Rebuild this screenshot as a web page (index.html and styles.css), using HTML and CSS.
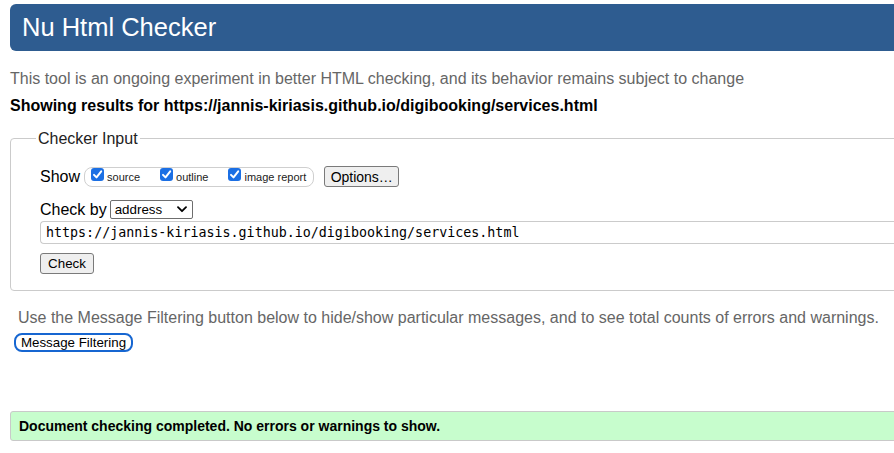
FILE: index.html
```html
<!DOCTYPE html>
<html lang="en">
<head>
<meta charset="utf-8">
<title>Nu Html Checker</title>
<link rel="stylesheet" href="styles.css">
</head>
<body>
<div class="page">
  <h1 class="header">Nu Html Checker</h1>
  <p class="intro">This tool is an ongoing experiment in better HTML checking, and its behavior remains subject to change</p>
  <p class="showing">Showing results for https://jannis-kiriasis.github.io/digibooking/services.html</p>
  <fieldset class="checker">
    <legend class="legend">Checker Input</legend>
    <div class="row show-row">
      <span class="label">Show</span>
      <span class="group">
        <span class="opt"><svg class="cb" width="13" height="13" viewBox="0 0 13 13"><rect width="13" height="13" rx="3" fill="#1b6fe4"/><path d="M3 6.9 L5.5 9.4 L10.2 3.4" fill="none" stroke="#fff" stroke-width="2" stroke-linecap="round" stroke-linejoin="round"/></svg><span class="opt-text">source</span></span>
        <span class="opt"><svg class="cb" width="13" height="13" viewBox="0 0 13 13"><rect width="13" height="13" rx="3" fill="#1b6fe4"/><path d="M3 6.9 L5.5 9.4 L10.2 3.4" fill="none" stroke="#fff" stroke-width="2" stroke-linecap="round" stroke-linejoin="round"/></svg><span class="opt-text">outline</span></span>
        <span class="opt"><svg class="cb" width="13" height="13" viewBox="0 0 13 13"><rect width="13" height="13" rx="3" fill="#1b6fe4"/><path d="M3 6.9 L5.5 9.4 L10.2 3.4" fill="none" stroke="#fff" stroke-width="2" stroke-linecap="round" stroke-linejoin="round"/></svg><span class="opt-text">image report</span></span>
      </span>
      <span class="btn options">Options…</span>
    </div>
    <div class="row checkby-row">
      <span class="label">Check by</span>
      <span class="select">address<svg class="chev" width="10" height="7" viewBox="0 0 10 7"><path d="M1 1.2 L5 5.2 L9 1.2" fill="none" stroke="#000" stroke-width="1.8" stroke-linecap="round" stroke-linejoin="round"/></svg></span>
    </div>
    <div class="url">https://jannis-kiriasis.github.io/digibooking/services.html</div>
    <div class="row check-row">
      <span class="btn check">Check</span>
    </div>
  </fieldset>
  <p class="filter-note">Use the Message Filtering button below to hide/show particular messages, and to see total counts of errors and warnings.</p>
  <span class="btn filter">Message Filtering</span>
  <div class="success">Document checking completed. No errors or warnings to show.</div>
</div>
</body>
</html>
```
FILE: styles.css
```css
html, body {
  margin: 0;
  padding: 0;
  overflow: hidden;
  background: #fff;
}
body {
  font-family: "Liberation Sans", Arial, sans-serif;
  font-size: 16px;
  color: #000;
}
.page {
  width: 1100px;
  padding: 4px 0 0 10px;
  display: flex;
  flex-direction: column;
  align-items: flex-start;
}
.header {
  align-self: stretch;
  margin: 0;
  height: 47px;
  line-height: 47px;
  padding-left: 12px;
  background: #2e5c90;
  color: #fff;
  font-size: 25.5px;
  font-weight: normal;
  border-radius: 6px;
}
.intro {
  margin: 18px 0 0 0;
  line-height: 19px;
  color: #666;
}
.showing {
  margin: 8px 0 0 0;
  line-height: 19px;
  font-weight: bold;
}
.checker {
  align-self: stretch;
  margin: 14px 0 0 0;
  padding: 0 0 16px 29px;
  border: 1px solid #cbcbcb;
  border-radius: 4px;
  min-width: 0;
}
.legend {
  padding: 0 2px;
  margin-left: -4px;
  line-height: 19px;
  color: #222;
}
.row {
  display: flex;
  align-items: center;
}
.label {
  line-height: 19px;
}
.show-row {
  margin-top: 18px;
  height: 21px;
}
.group {
  display: flex;
  align-items: center;
  margin-left: 4px;
  height: 18px;
  padding: 0 7px 0 6px;
  border: 1px solid #cfcfcf;
  border-radius: 8px;
}
.opt {
  display: flex;
  align-items: center;
  margin-right: 20px;
}
.opt:last-child {
  margin-right: 0;
}
.cb {
  display: block;
  margin-top: -4px;
}
.opt-text {
  font-size: 11px;
  margin-left: 3px;
  color: #222;
}
.btn {
  display: inline-flex;
  align-items: center;
  justify-content: center;
  box-sizing: border-box;
  background: #efefef;
  border: 1px solid #7a7a7a;
  border-radius: 3px;
  font-size: 13.33px;
  color: #000;
  white-space: nowrap;
}
.options {
  margin-left: 10px;
  width: 75px;
  height: 21px;
  font-size: 14px;
}
.checkby-row {
  margin-top: 13px;
  height: 19px;
}
.select {
  display: inline-flex;
  align-items: center;
  justify-content: space-between;
  box-sizing: border-box;
  margin-left: 3px;
  width: 83px;
  height: 19px;
  padding: 0 5px 0 4px;
  border: 1px solid #6e6e6e;
  border-radius: 2px;
  font-size: 13.33px;
}
.chev {
  display: block;
}
.url {
  margin-top: 2px;
  height: 21px;
  line-height: 21px;
  padding-left: 5px;
  border: 1px solid #cbcbcb;
  border-right: none;
  border-radius: 4px 0 0 4px;
  font-family: "DejaVu Sans Mono", "Liberation Mono", monospace;
  font-size: 13.33px;
  color: #000;
}
.check-row {
  margin-top: 9px;
}
.check {
  width: 54px;
  height: 21px;
}
.filter-note {
  margin: 17px 0 0 8px;
  line-height: 19px;
  color: #666;
}
.filter {
  margin: 6px 0 0 4px;
  height: 19px;
  width: 119px;
  padding: 0;
  border: 2px solid #1666d1;
  border-radius: 8px;
  background: #fff;
}
.success {
  align-self: stretch;
  margin-top: 59px;
  box-sizing: border-box;
  height: 30px;
  line-height: 28px;
  padding-left: 8px;
  background: #c7fdcd;
  border: 1px solid #c9c9c9;
  border-radius: 3px;
  font-size: 14px;
  font-weight: bold;
}
```
